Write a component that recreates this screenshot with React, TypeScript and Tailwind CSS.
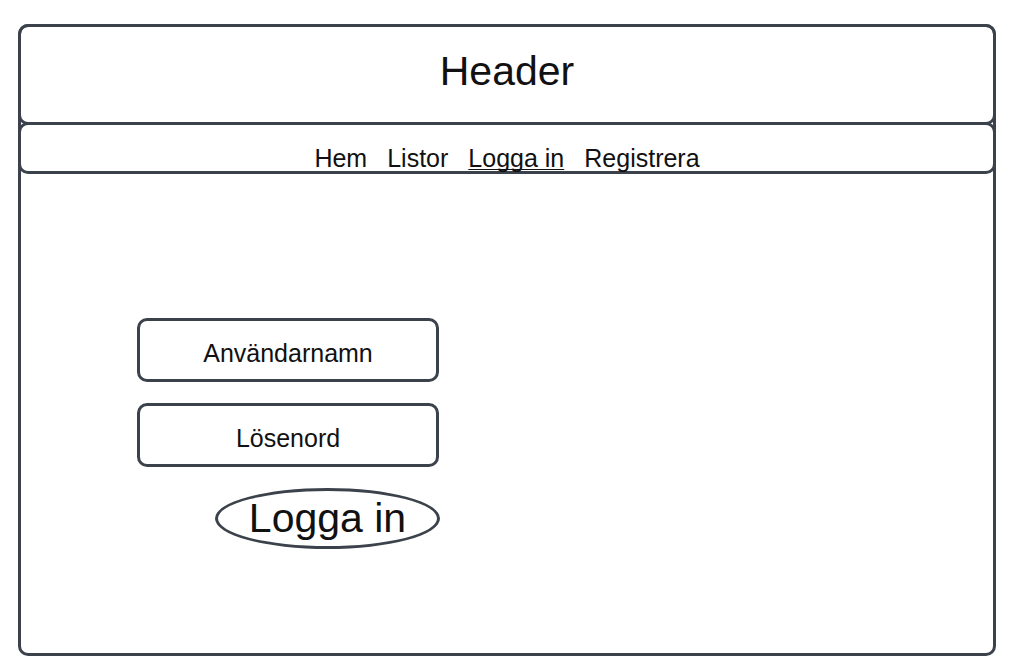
const navLinks = [
    { label: 'Hem', active: false },
    { label: 'Listor', active: false },
    { label: 'Logga in', active: true },
    { label: 'Registrera', active: false },
];

function Field({ label }: { label: string }) {
    return (
        <div className="w-[302px] h-[64px] border-[3px] border-[#3c424b] rounded-[10px] flex justify-center pt-[20px]">
            <span className="text-[25px] leading-none text-[#111]">{label}</span>
        </div>
    );
}

export default function App() {
    return (
        <div className="min-h-screen bg-white pt-[24px] font-['Liberation_Sans',Arial,sans-serif]">
            <div className="ml-[18px] mr-[17px] h-[632px] border-[3px] border-[#3c424b] rounded-[10px] flex flex-col">
                <header className="-mx-[3px] -mt-[3px] h-[101px] border-[3px] border-[#3c424b] rounded-[10px] flex justify-center pt-[24px]">
                    <h1 className="text-[41px] leading-none text-[#111]">Header</h1>
                </header>

                <nav className="-mx-[3px] -mt-[3px] h-[52px] border-[3px] border-[#3c424b] rounded-[10px] flex justify-center gap-[20px] pt-[21px]">
                    {navLinks.map((link) => (
                        <a
                            key={link.label}
                            href="#"
                            className={`text-[25px] leading-none text-[#111] ${link.active ? 'underline decoration-1 underline-offset-[2px] [text-decoration-skip-ink:none]' : ''}`}
                        >
                            {link.label}
                        </a>
                    ))}
                </nav>

                <main className="pl-[116px] pt-[144px] flex flex-col gap-[21px]">
                    <Field label="Användarnamn" />
                    <Field label="Lösenord" />
                    <button className="ml-[78px] w-[225px] h-[61px] border-[3px] border-[#3c424b] rounded-[50%] flex items-center justify-center">
                        <span className="text-[41px] leading-none text-[#111]">Logga in</span>
                    </button>
                </main>
            </div>
        </div>
    );
}
